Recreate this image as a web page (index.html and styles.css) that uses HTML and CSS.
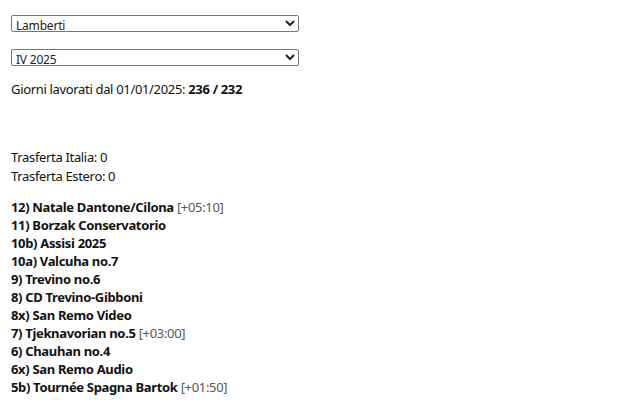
FILE: index.html
```html
<!DOCTYPE html>
<html>
<head>
<meta charset="utf-8">
<link rel="stylesheet" href="styles.css">
</head>
<body>
<div class="page">
  <select class="pick"><option>Lamberti</option></select>
  <select class="pick"><option>IV 2025</option></select>
  <p class="days">Giorni lavorati dal 01/01/2025: <b>236 / 232</b></p>
  <div class="trips">
    <div>Trasferta Italia: 0</div>
    <div>Trasferta Estero: 0</div>
  </div>
  <ul class="jobs">
    <li><b>12) Natale Dantone/Cilona</b> <span class="extra">[+05:10]</span></li>
    <li><b>11) Borzak Conservatorio</b></li>
    <li><b>10b) Assisi 2025</b></li>
    <li><b>10a) Valcuha no.7</b></li>
    <li><b>9) Trevino no.6</b></li>
    <li><b>8) CD Trevino-Gibboni</b></li>
    <li><b>8x) San Remo Video</b></li>
    <li><b>7) Tjeknavorian no.5</b> <span class="extra">[+03:00]</span></li>
    <li><b>6) Chauhan no.4</b></li>
    <li><b>6x) San Remo Audio</b></li>
    <li><b>5b) Tournée Spagna Bartok</b> <span class="extra">[+01:50]</span></li>
  </ul>
</div>
</body>
</html>
```
FILE: styles.css
```css
html, body {
  margin: 0;
  background: #fff;
}
.page {
  padding: 15px 11px;
  font-family: "Noto Sans", "Open Sans", sans-serif;
  font-size: 13px;
  line-height: 18px;
  letter-spacing: -0.33px;
  color: #111;
  display: flex;
  flex-direction: column;
  align-items: flex-start;
}
.pick {
  width: 288px;
  height: 17px;
  font-family: "Noto Sans", sans-serif;
  font-size: 12px;
  letter-spacing: -0.2px;
  margin: 0 0 17px 0;
  padding: 0;
  border: 1px solid #767676;
  border-radius: 2px;
  background: #fff;
  color: #222;
}
.pick + .pick {
  margin-bottom: 14px;
}
.days {
  margin: 0 0 50px 0;
}
.trips {
  margin-bottom: 12px;
  line-height: 19px;
}
.jobs {
  list-style: none;
  margin: 0;
  padding: 0;
}
.jobs b {
  font-weight: 700;
}
.extra {
  color: #555;
}
```
